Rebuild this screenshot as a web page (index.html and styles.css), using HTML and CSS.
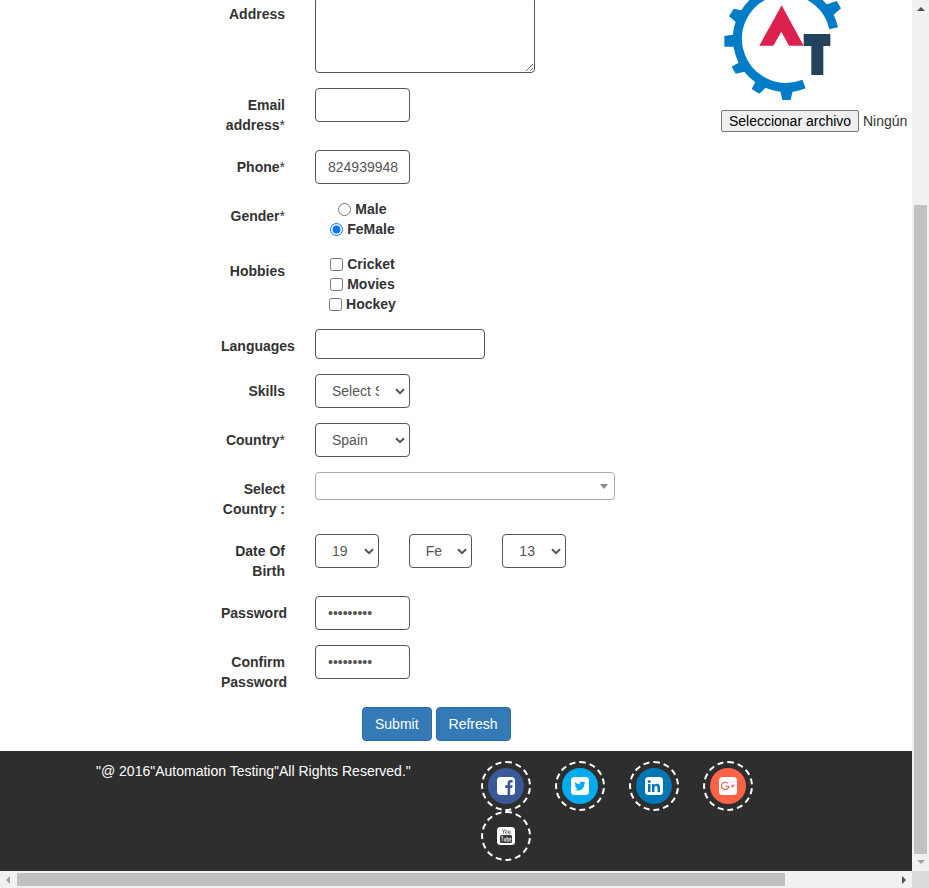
FILE: index.html
```html
<!DOCTYPE html>
<html lang="es">
<head>
<meta charset="utf-8">
<title>Register</title>
<link rel="stylesheet" href="styles.css">
</head>
<body>
<div class="window">
  <div class="page">
    <main class="content">
      <form class="form">
        <div class="row row-address"><label class="label">Address</label><textarea class="control address"></textarea></div>
        <div class="row"><label class="label">Email address<span class="req">*</span></label><input class="control" type="text"></div>
        <div class="row"><label class="label">Phone<span class="req">*</span></label><input class="control phone" type="text" value="824939948"></div>
        <div class="row"><label class="label">Gender<span class="req">*</span></label>
          <div class="choices">
            <label class="choice"><input type="radio" name="gender"> Male</label>
            <label class="choice"><input type="radio" name="gender" checked> FeMale</label>
          </div>
        </div>
        <div class="row"><label class="label">Hobbies</label>
          <div class="choices">
            <label class="choice"><input type="checkbox"> Cricket</label>
            <label class="choice"><input type="checkbox"> Movies</label>
            <label class="choice"><input type="checkbox"> Hockey</label>
          </div>
        </div>
        <div class="row"><label class="label">Languages</label><div class="multi"></div></div>
        <div class="row"><label class="label">Skills</label><select class="control select"><option>Select Skills</option></select></div>
        <div class="row"><label class="label">Country<span class="req">*</span></label><select class="control select"><option>Spain</option></select></div>
        <div class="row"><label class="label">Select Country :</label><div class="combo"><span class="caret"></span></div></div>
        <div class="row"><label class="label">Date Of Birth</label>
          <div class="dates">
            <select class="control select date"><option>19</option></select>
            <select class="control select date"><option>Fe</option></select>
            <select class="control select date"><option>13</option></select>
          </div>
        </div>
        <div class="row"><label class="label">Password</label><input class="control" type="password" value="secret123"></div>
        <div class="row"><label class="label">Confirm Password</label><input class="control" type="password" value="secret123"></div>
        <div class="actions"><button class="btn" type="button">Submit</button><button class="btn" type="button">Refresh</button></div>
      </form>
      <aside class="upload">
        <svg class="logo" viewBox="63 0 360 300">
          <g fill="#007dc6">
            <path d="M312 252A146 146 0 1 1 401 85" fill="none" stroke="#007dc6" stroke-width="27"/>
            <path d="M73 108L112 102V150L105 140H73Z"/>
            <path d="M101 26L87 49L112 70L108 84L150 34L133 32Z"/>
            <path d="M95 200L107 221L140 214L156 222L114 170L118 187Z"/>
            <path d="M155 267L178 281L200 260L216 262L158 226L168 242Z"/>
            <path d="M230 262L240 269L247 300H272L279 269L292 262Z"/>
            <path d="M352 18L374 15L410 3L423 25L397 48L394 62Z"/>
            <path d="M153 0L165 14L195 0Z"/>
          </g>
          <path d="M245 16L311 137H267L244 95L220 137H178Z" fill="#dd214f"/>
          <path d="M311 102H391V138H370V225H334V138H311Z" fill="#23435c"/>
        </svg>
        <div class="file"><button class="file-btn" type="button">Seleccionar archivo</button><span>Ningún</span></div>
      </aside>
    </main>
    <footer class="footer">
      <p class="copy">"@ 2016"Automation Testing"All Rights Reserved."</p>
      <div class="social">
        <a class="ring"><span class="disc facebook"><svg viewBox="0 0 18 18"><rect width="18" height="18" rx="3.5" fill="#fff"/><path d="M10.600 18V11H8.200V8.300h2.400V6.200C10.600 4 12 3 14 3h1.600v2.500h-1.200c-1 0-1.200.4-1.200 1.200v1.600h2.400L15.200 11h-2v7Z" fill="#3b5998"/></svg></span></a>
        <a class="ring"><span class="disc twitter"><svg viewBox="0 0 18 18"><rect width="18" height="18" rx="3.5" fill="#fff"/><path d="M14.500 5.600l-1.100 1C13.500 11 10.500 13.500 7.200 13.500c-1.400 0-2.600-.3-3.500-.9 1.100.1 2.200-.3 2.900-.9-1-.1-1.700-.7-1.900-1.500h.9C4.500 9.700 4 8.900 4 7.900l.9.200C3.900 7.400 3.800 6.200 4.300 5.300 5.400 6.500 7 7.200 8.800 7.300 8.400 5.600 9.700 4.400 11 4.400c.7 0 1.200.3 1.600.7l1.500-.5-.9 1.200Z" fill="#00acee"/></svg></span></a>
        <a class="ring"><span class="disc linkedin"><svg viewBox="0 0 18 18"><rect width="18" height="18" rx="3.5" fill="#fff"/><g fill="#0077b5"><circle cx="4.200" cy="4.400" r="1.500"/><path d="M3 7h2.500v8H3ZM7 7h2.400v1.100C10.900 6 15 6.300 15 10.400V15h-2.500v-4.200c0-2.500-3-2.400-3 0V15H7Z"/></g></svg></span></a>
        <a class="ring"><span class="disc google"><svg viewBox="0 0 18 18"><rect width="18" height="18" rx="3.5" fill="#fff"/><path d="M8.900 6.300A3.700 3.700 0 1 0 9.900 9.300H6.300M12.200 9h3.200M13.800 7.400v3.200" fill="none" stroke="#e9553d" stroke-width="1.050"/></svg></span></a>
        <a class="ring"><span class="disc"><svg viewBox="0 0 18 18"><rect width="18" height="18" rx="3.5" fill="#fff"/><g fill="none" stroke="#666" stroke-width=".8"><path d="M5.300 2l1.300 2.700V7M8 2L6.600 4.700"/><rect x="8.600" y="3.600" width="1.600" height="3.200" rx=".8"/><path d="M11.600 3.500v3.100h1.500V3.500"/></g><rect x="3" y="8" width="12" height="8" rx="1.500" fill="#333"/><path d="M4 9.800h2.500M5.200 9.800V14.500M7.300 11v3.200h1.400V11M10 9.500v4.900h1.300v-3H10M14.200 14.200h-1.500v-3h1.300v1.500h-1.300" fill="none" stroke="#fff" stroke-width=".7"/></svg></span></a>
      </div>
    </footer>
  </div>
  <div class="vbar"><i class="arrow up"></i><div class="vthumb"></div><i class="arrow down"></i></div>
  <div class="hbar"><i class="arrow left"></i><div class="hthumb"></div><i class="arrow right"></i></div>
  <div class="corner"></div>
</div>
</body>
</html>
```
FILE: styles.css
```css
* { box-sizing: border-box; }
body {
  margin: 0;
  overflow: hidden;
  font: 14px/20px "Liberation Sans", Arial, sans-serif;
  color: #333;
  background: #fff;
}
.window {
  display: grid;
  grid-template: 871px 17px / 912px 17px;
  width: 929px;
  height: 888px;
}
.page { display: flex; flex-direction: column; overflow: hidden; }
.content {
  display: flex;
  height: 751px;
  padding-left: 221px;
  overflow: hidden;
}
.form {
  display: flex;
  flex-direction: column;
  gap: 15px;
  width: 500px;
}
.row { display: grid; grid-template-columns: 64px 1fr; column-gap: 30px; align-items: start; flex: none; }
.row-address { margin-top: -3px; }
.label { padding-top: 7px; text-align: right; font-weight: bold; }
.req { font-weight: normal; }
.control {
  width: 95px;
  height: 34px;
  margin: 0;
  padding: 6px 12px;
  border: 1px solid #555;
  border-radius: 4px;
  background-color: #fff;
  color: #555;
  font: inherit;
}
.phone { padding-right: 10px; }
.select {
  appearance: none;
  padding: 6px 30px 6px 16px;
  background-image: url("data:image/svg+xml,%3Csvg xmlns='http://www.w3.org/2000/svg' width='10' height='7'%3E%3Cpath d='M1 1.200L5 5.200L9 1.200' fill='none' stroke='%23555' stroke-width='2'/%3E%3C/svg%3E");
  background-repeat: no-repeat;
  background-position: right 4px center;
}
.address { display: block; width: 220px; height: 76px; }
.choices { display: flex; flex-direction: column; align-items: center; width: 95px; font-weight: bold; }
.choice { height: 20px; white-space: nowrap; }
.choice input { width: 13px; height: 13px; margin: 0; vertical-align: -2px; }
.multi { width: 170px; height: 30px; border: 1px solid #555; border-radius: 4px; }
.combo {
  display: flex;
  align-items: center;
  justify-content: flex-end;
  width: 300px;
  height: 28px;
  padding-right: 6px;
  border: 1px solid #aaa;
  border-radius: 4px;
}
.caret { border: 4px solid transparent; border-top: 5px solid #888; border-bottom: 0; }
.dates { display: flex; gap: 30px; width: 251px; }
.date { flex: 1; min-width: 0; padding-right: 28px; }
.actions { display: flex; gap: 4px; margin-left: 141px; }
.btn {
  height: 34px;
  padding: 6px 12px;
  border: 1px solid #2e6da4;
  border-radius: 4px;
  background: #337ab7;
  color: #fff;
  font: inherit;
}
.upload { flex: 1; }
.logo { display: block; width: 120px; height: 100px; }
.file { display: flex; align-items: center; gap: 4px; margin-top: 10px; }
.file-btn {
  width: 138px;
  height: 22px;
  padding: 0;
  border: 1px solid #767676;
  border-radius: 2px;
  background: #efefef;
  color: #000;
  font: inherit;
  white-space: nowrap;
}
.footer { display: flex; height: 120px; padding: 10px 0 0 96px; background: #2e2e2e; color: #fff; }
.copy { width: 385px; margin: 0; }
.social { display: flex; flex-wrap: wrap; align-content: flex-start; column-gap: 24px; width: 290px; }
.ring { display: flex; align-items: center; justify-content: center; width: 50px; height: 50px; border: 2px dashed #fff; border-radius: 50%; }
.disc { display: flex; align-items: center; justify-content: center; width: 36px; height: 36px; border-radius: 50%; }
.disc svg { width: 18px; height: 18px; }
.facebook { background: #3b5998; }
.twitter { background: #00acee; }
.linkedin { background: #0077b5; }
.google { background: #ff6347; }
.vbar, .hbar { display: flex; align-items: center; justify-content: space-between; background: #f1f1f1; }
.vbar { flex-direction: column; padding: 7px 0; }
.hbar { grid-row: 2; padding: 0 6px; }
.corner { background: #dcdcdc; }
.vthumb { width: 13px; height: 649px; margin-top: auto; margin-bottom: 6px; background: #c1c1c1; }
.hthumb { width: 768px; height: 13px; margin: 0 auto 0 7px; background: #c1c1c1; }
.arrow { border: 4px solid transparent; }
.up { border-top: 0; border-bottom-color: #505050; }
.down { border-bottom: 0; border-top-color: #a3a3a3; }
.left { border-left: 0; border-right-color: #a3a3a3; }
.right { border-right: 0; border-left-color: #505050; }
```
